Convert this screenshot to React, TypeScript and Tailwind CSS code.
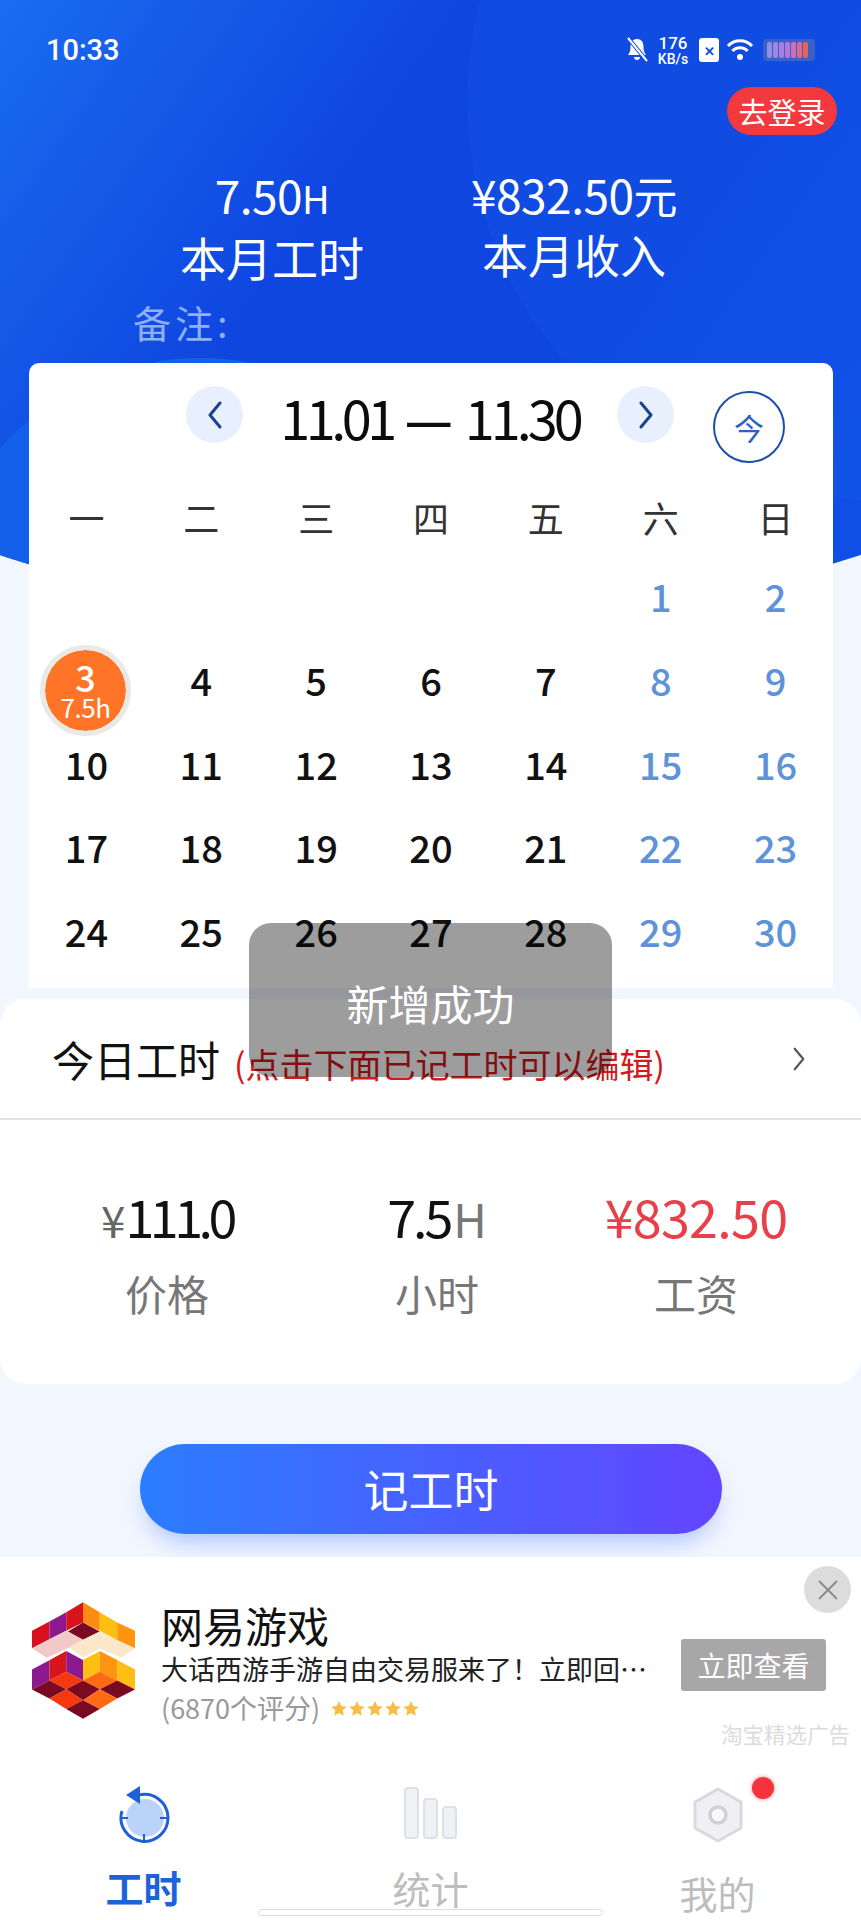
import React from "react";

const weekdays = ["一", "二", "三", "四", "五", "六", "日"];
const rows: (number | null)[][] = [
  [null, null, null, null, null, 1, 2],
  [3, 4, 5, 6, 7, 8, 9],
  [10, 11, 12, 13, 14, 15, 16],
  [17, 18, 19, 20, 21, 22, 23],
  [24, 25, 26, 27, 28, 29, 30],
];

function Chevron({ dir, color = "#1d3f8c", w = 16, h = 28, sw = 3 }: { dir: "left" | "right"; color?: string; w?: number; h?: number; sw?: number }) {
  return (
    <svg width={w} height={h} viewBox="0 0 16 28" fill="none">
      <path d={dir === "left" ? "M13 2 L3 14 L13 26" : "M3 2 L13 14 L3 26"} stroke={color} strokeWidth={sw} strokeLinecap="round" strokeLinejoin="round" />
    </svg>
  );
}

function Logo() {
  const maroon = "#7a0a22";
  return (
    <svg width="103" height="117" viewBox="38 25 307 347" className="shrink-0">
      <polygon points="38,110 90,82 90,135 38,162" fill="#d80f1c" />
      <polygon points="90,82 140,55 140,110 90,135" fill="#8c1a8e" />
      <polygon points="140,55 190,25 190,85 140,110" fill="#d8141c" />
      <polygon points="190,25 240,55 240,110 190,85" fill="#ff8c12" />
      <polygon points="240,55 292,85 292,138 240,110" fill="#ffbe12" />
      <polygon points="292,85 345,110 345,162 292,138" fill="#ff9410" />
      <polygon points="145,112 190,85 240,112 190,137" fill={maroon} />
      <polygon points="38,162 90,135 140,110 190,137 150,160 82,190" fill="#f2c8c8" />
      <polygon points="150,160 190,137 240,112 292,138 345,162 305,190 240,163 190,190" fill="#fbe8ca" />
      <polygon points="38,225 90,198 90,258 38,285" fill="#8c1a8e" />
      <polygon points="90,198 140,170 140,232 90,258" fill="#d8141c" />
      <polygon points="140,170 190,197 190,258 140,232" fill="#8c1a8e" />
      <polygon points="190,197 240,170 240,232 190,258" fill="#ffbe12" />
      <polygon points="240,170 292,197 292,258 240,232" fill="#ff9410" />
      <polygon points="292,197 345,225 345,285 292,258" fill="#ffbe12" />
      <polygon points="90,258 140,232 190,258 140,284" fill="#f4380f" />
      <polygon points="190,258 240,232 292,258 240,284" fill="#ff6a12" />
      <polygon points="38,285 90,258 140,284 90,312" fill={maroon} />
      <polygon points="140,284 190,258 240,284 190,317" fill={maroon} />
      <polygon points="240,284 292,258 345,285 292,312" fill={maroon} />
      <polygon points="90,312 140,284 190,317 140,343" fill="#f4380f" />
      <polygon points="190,317 240,284 292,312 240,343" fill="#ff6a12" />
      <polygon points="140,343 190,317 240,343 190,372" fill={maroon} />
    </svg>
  );
}

function Star() {
  return (
    <svg width="18" height="17" viewBox="0 0 24 24">
      <path d="M12 1.5 L15.2 8.6 L23 9.4 L17.1 14.6 L18.9 22.3 L12 18.2 L5.1 22.3 L6.9 14.6 L1 9.4 L8.8 8.6 Z" fill="#f8bd45" />
    </svg>
  );
}

export default function App() {
  return (
    <div className="relative w-[861px] h-[1920px] overflow-hidden bg-[#f2f6fe] font-['Noto_Sans_CJK_SC','Noto_Sans',sans-serif]">
      {/* header backdrop */}
      <div className="absolute left-[-170px] top-0 w-[1200px] h-[615px] rounded-b-[600px_198px] overflow-hidden bg-[linear-gradient(125deg,#1a6cf0_139px,#0f46e0_520px,#0f46e0_800px,#1050e6_1200px)]">
        <div className="absolute left-[637px] top-[-300px] w-[800px] h-[800px] rounded-full bg-[#1d6af0]/15" />
        <div className="absolute left-[103px] top-[358px] w-[534px] h-[534px] rounded-full bg-[#1560ea]" />
      </div>

      <div className="relative flex flex-col">
        {/* status bar */}
        <div className="h-[87px] flex items-start justify-between pl-[46px] pr-[46px] pt-[33px] text-white">
          <span className="font-['Roboto',sans-serif] font-medium text-[29px] leading-[34px]">10:33</span>
          <div className="flex items-center h-[34px]">
            <svg width="22" height="26" viewBox="0 0 22 26" fill="white">
              <path d="M11 2 C6 2 4.5 6 4.5 10 C4.5 14 3.5 16 2 18 H20 C18.5 16 17.5 14 17.5 10 C17.5 6 16 2 11 2 Z M8 20 H14 C14 24 8 24 8 20 Z" />
              <path d="M2 1 L21 24" stroke="#1048e2" strokeWidth="4" />
              <path d="M2 1 L21 24" stroke="white" strokeWidth="2" />
            </svg>
            <div className="ml-[9px] w-[32px] flex flex-col items-center font-['Roboto',sans-serif] font-medium text-[14px] leading-[14px]">
              <span className="text-[17px] leading-[17px]">176</span>
              <span>KB/s</span>
            </div>
            <div className="ml-[10px] w-[20px] h-[24px] bg-white rounded-[3px] flex items-center justify-center text-[#1048e2] text-[13px] font-bold leading-none">✕</div>
            <svg className="ml-[7px]" width="28" height="24" viewBox="0 0 28 24" fill="none" stroke="white" strokeWidth="3">
              <path d="M2 8 C8 1 20 1 26 8" />
              <path d="M6.5 13 C10 8.5 18 8.5 21.5 13" />
              <circle cx="14" cy="19" r="3" fill="white" stroke="none" />
            </svg>
            <div className="ml-[9px] w-[52px] h-[22px] rounded-[4px] bg-[#3a62c4] flex items-center gap-[1px] px-[4px]">
              {["#8f8fe8", "#9a86e6", "#a77fe0", "#bb76d4", "#cc6fc0", "#dd6a8a", "#e4645c"].map((c) => (
                <div key={c} style={{ backgroundColor: c }} className="w-[5px] h-[16px] rounded-[2px] blur-[0.5px]" />
              ))}
            </div>
          </div>
        </div>

        {/* login */}
        <div className="flex justify-end pr-[24px]">
          <div className="w-[110px] h-[48px] rounded-full bg-[#f23a3e] text-white text-[29px] leading-[48px] text-center">去登录</div>
        </div>

        {/* month stats */}
        <div className="mt-[31px] flex text-white">
          <div className="ml-[122px] w-[300px] flex flex-col items-center">
            <div className="text-[46px] leading-[56px] tracking-[-0.5px]">7.50<span className="text-[38px]">H</span></div>
            <div className="text-[46px] leading-[60px]">本月工时</div>
          </div>
          <div className="w-[304px] flex flex-col items-center">
            <div className="text-[46px] leading-[56px] tracking-[-0.5px]">¥832.50<span className="text-[44px]">元</span></div>
            <div className="text-[46px] leading-[60px]">本月收入</div>
          </div>
        </div>

        <div className="mt-[11px] pl-[133px] text-[38px] leading-[50px] tracking-[4px] text-[#8fb0f7]">备注:</div>

        {/* calendar */}
        <div className="mt-[16px] ml-[29px] w-[804px] h-[625px] bg-white rounded-t-[10px]">
          <div className="h-[117px] flex items-start pt-[23px] pl-[157px]">
            <div className="w-[57px] h-[57px] rounded-full bg-[#e9f0fd] flex items-center justify-center"><Chevron dir="left" /></div>
            <div className="ml-[37px] w-[300px] h-[57px] flex items-center justify-center text-[54px] leading-[64px] mt-[2px] text-[#0c0c0c] whitespace-nowrap">
              <span className="tracking-[-4.5px]">11.01</span>
              <span className="mx-[10px] w-[52px] text-center text-[54px] leading-[64px] shrink-0 font-medium">—</span>
              <span className="tracking-[-4px]">11.30</span>
            </div>
            <div className="ml-[37px] w-[57px] h-[57px] rounded-full bg-[#e9f0fd] flex items-center justify-center"><Chevron dir="right" /></div>
            <div className="ml-[39px] mt-[5px] w-[72px] h-[72px] rounded-full border-2 border-[#1d4fa8] flex items-center justify-center text-[30px] text-[#2a63c0]">今</div>
          </div>
          <div className="grid grid-cols-7 h-[74px] items-center text-center text-[36px] leading-[74px] text-[#333]">
            {weekdays.map((d) => <div key={d}>{d}</div>)}
          </div>
          <div className="grid grid-cols-7 auto-rows-[83.75px] text-center text-[38px]">
            {rows.flatMap((row, r) =>
              row.map((d, c) => (
                <div key={`${r}-${c}`} className={`relative h-full leading-[83.75px] font-medium ${c >= 5 ? "text-[#5f93d8]" : "text-[#111]"}`}>
                  {d === 3 ? (
                    <div className="absolute left-[11px] top-[7px] w-[91px] h-[91px] rounded-full bg-[#ff7427] border-[5.5px] border-[#e9e9e6] flex flex-col items-center justify-center text-white font-normal bg-clip-padding">
                      <span className="text-[36px] h-[30px] leading-[30px] font-medium">3</span>
                      <span className="text-[26px] h-[26px] leading-[26px] mt-[3px] tracking-[-0.5px]">7.5h</span>
                    </div>
                  ) : d}
                </div>
              ))
            )}
          </div>
        </div>

        {/* today */}
        <div className="mt-[11px] h-[385px] bg-white rounded-[26px]">
          <div className="h-[121px] border-b-2 border-[#e2e2e4] flex items-center pl-[52px] pr-[55px]">
            <span className="text-[42px] leading-[50px] text-[#111]">今日工时</span>
            <span className="ml-[14px] mt-[10px] text-[34px] leading-[40px] text-[#d4181c] whitespace-nowrap">(点击下面已记工时可以编辑)</span>
            <span className="ml-auto flex"><Chevron dir="right" color="#555" w={14} h={24} sw={2.5} /></span>
          </div>
          <div className="grid grid-cols-[334px_206px_312px] text-center pt-[62px]">
            <div>
              <div className="h-[68px] text-[52px] leading-[68px] tracking-[-4.5px] text-[#111] whitespace-nowrap"><span className="text-[#666] text-[44px] tracking-[0px]">¥</span>111.0</div>
              <div className="mt-[18px] text-[42px] leading-[50px] text-[#777]">价格</div>
            </div>
            <div>
              <div className="h-[68px] text-[52px] leading-[68px] tracking-[-3px] text-[#111] whitespace-nowrap">7.5<span className="text-[#777] text-[46px] tracking-[0px] ml-[3px]">H</span></div>
              <div className="mt-[18px] text-[42px] leading-[50px] text-[#777]">小时</div>
            </div>
            <div>
              <div className="h-[68px] text-[52px] leading-[68px] tracking-[-0.7px] text-[#e8404a] whitespace-nowrap">¥832.50</div>
              <div className="mt-[18px] text-[42px] leading-[50px] text-[#777]">工资</div>
            </div>
          </div>
        </div>

        {/* record button */}
        <div className="mt-[60px] ml-[140px] w-[582px] h-[90px] rounded-full bg-[linear-gradient(90deg,#2b7dff,#6345ff)] shadow-[0_14px_24px_-8px_rgba(70,120,255,0.45)] text-white text-[45px] leading-[90px] text-center">记工时</div>

        {/* ad + nav */}
        <div className="relative mt-[23px] h-[363px] bg-white">
          <div className="flex items-start pl-[32px] pt-[45px]">
            <Logo />
            <div className="ml-[26px] w-[500px]">
              <div className="text-[42px] leading-[48px] text-[#111] mt-[-1px]">网易游戏</div>
              <div className="mt-[1px] text-[27px] leading-[38px] text-[#222] whitespace-nowrap">大话西游手游自由交易服来了！立即回…</div>
              <div className="mt-[2px] flex items-center text-[27px] leading-[36px] text-[#999]">
                (6870个评分)
                <span className="ml-[10px] flex"><Star /><Star /><Star /><Star /><Star /></span>
              </div>
            </div>
          </div>
          <div className="absolute left-[681px] top-[82px] w-[145px] h-[52px] rounded-[3px] bg-[#a8a7a8] text-white text-[28px] leading-[52px] text-center">立即查看</div>
          <div className="absolute left-[804px] top-[9px] w-[47px] h-[47px] rounded-full bg-[#dcdcdc] flex items-center justify-center">
            <svg width="22" height="22" viewBox="0 0 22 22" stroke="#8a8a8a" strokeWidth="1.8"><path d="M2 2 L20 20 M20 2 L2 20" /></svg>
          </div>
          <div className="absolute left-[721px] top-[163px] text-[21.5px] leading-[28px] text-[#dcdcdc]">淘宝精选广告</div>

          <div className="absolute left-0 right-0 top-[229px] grid grid-cols-3 text-center">
            <div className="flex flex-col items-center">
              <svg width="52" height="58" viewBox="0 0 52 58" fill="none">
                <circle cx="27" cy="32" r="19" fill="#bcd3f9" />
                <path d="M21 9 A23.5 23.5 0 1 1 4 25" stroke="#1f5fd8" strokeWidth="3" />
                <path d="M8 9 L22 0 L22 18 Z" fill="#1f5fd8" />
                <path d="M26 48 V56 M3 32 H10 M42 32 H49" stroke="#1f5fd8" strokeWidth="2" />
              </svg>
              <span className="mt-[21px] text-[38px] leading-[44px] font-bold text-[#1c62d8]">工时</span>
            </div>
            <div className="flex flex-col items-center">
              <div className="h-[58px] flex items-end gap-[4px] pb-[5px]">
                <div className="w-[15px] h-[52px] rounded-[4px] bg-[#f0f1f4] border-2 border-[#dfe0e4]" />
                <div className="w-[15px] h-[41px] rounded-[4px] bg-[#f0f1f4] border-2 border-[#dfe0e4]" />
                <div className="w-[15px] h-[33px] rounded-[4px] bg-[#f0f1f4] border-2 border-[#dfe0e4]" />
              </div>
              <span className="mt-[22px] text-[38px] leading-[44px] text-[#bdbdbd]">统计</span>
            </div>
            <div className="relative flex flex-col items-center">
              <svg width="52" height="58" viewBox="0 0 52 58" fill="none">
                <path d="M26 3 L49 16 V42 L26 55 L3 42 V16 Z" fill="#f0f0f4" stroke="#d8d9de" strokeWidth="3" strokeLinejoin="round" />
                <circle cx="26" cy="29" r="8" fill="#f8f8fa" stroke="#cfd0d6" strokeWidth="3.5" />
              </svg>
              <span className="mt-[27px] text-[38px] leading-[44px] text-[#bdbdbd]">我的</span>
              <div className="absolute left-[178px] top-[-9px] w-[22px] h-[22px] rounded-full bg-[#f5333f] shadow-[0_0_4px_rgba(245,51,63,0.6)]" />
            </div>
          </div>
          <div className="absolute left-[258px] top-[352px] w-[345px] h-[7px] rounded-full bg-white border border-[#dedede]" />
        </div>
      </div>

      {/* toast */}
      <div className="absolute left-[249px] top-[923px] w-[363px] h-[154px] rounded-[22px] bg-black/[0.385] flex items-start justify-center pt-[55px] text-white text-[42px] leading-[50px]">新增成功</div>
    </div>
  );
}
